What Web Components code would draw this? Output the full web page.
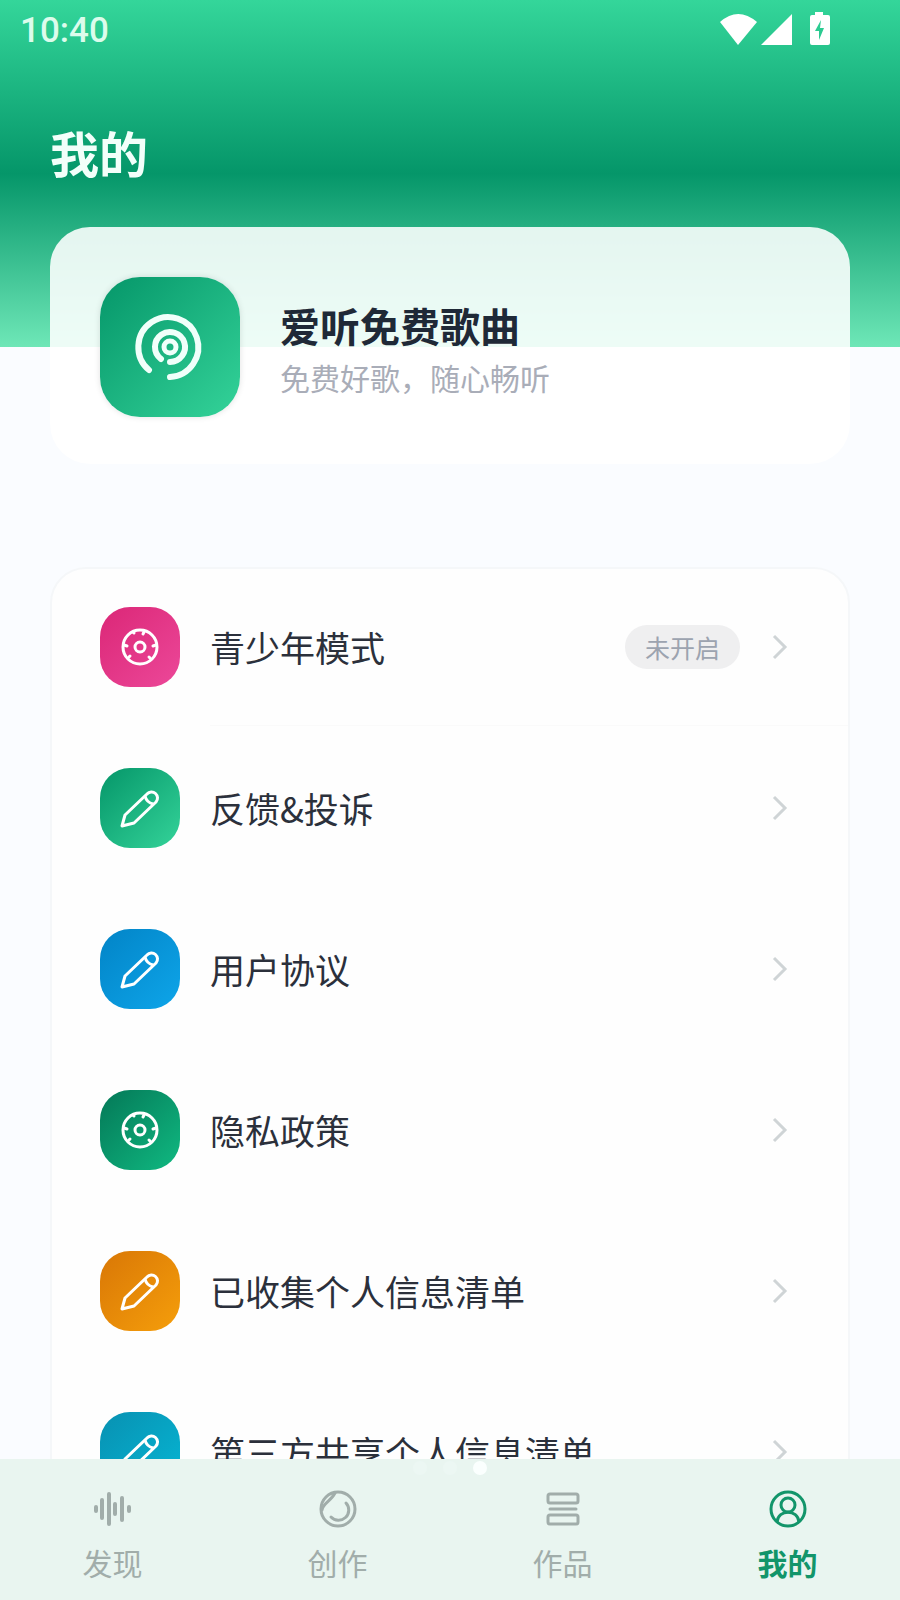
<!DOCTYPE html>
<html lang="zh-CN">
<head>
  <meta charset="utf-8">
  <meta name="viewport" content="width=device-width, initial-scale=1">
  <title>我的</title>
  <style>
    body {
      margin: 0;
      font-family: "Noto Sans CJK SC", sans-serif;
      background: #fafcff;
    }
  </style>
</head>
<body>
  <mine-page>
    <status-bar slot="status" time="10:40"></status-bar>
    <profile-card name="爱听免费歌曲" desc="免费好歌，随心畅听"></profile-card>
    <menu-list>
      <menu-item label="青少年模式" icon="dial" from="#db2777" to="#ec4899" state="未开启" divider></menu-item>
      <menu-item label="反馈&amp;投诉" icon="pencil" from="#059669" to="#34d399"></menu-item>
      <menu-item label="用户协议" icon="pencil" from="#0284c7" to="#0ea5e9"></menu-item>
      <menu-item label="隐私政策" icon="dial" from="#047857" to="#10b981"></menu-item>
      <menu-item label="已收集个人信息清单" icon="pencil" from="#d97706" to="#f59e0b"></menu-item>
      <menu-item label="第三方共享个人信息清单" icon="pencil" from="#0891b2" to="#06b6d4"></menu-item>
    </menu-list>
    <tab-bar slot="tabs">
      <tab-item label="发现" icon="wave"></tab-item>
      <tab-item label="创作" icon="disc"></tab-item>
      <tab-item label="作品" icon="stack"></tab-item>
      <tab-item label="我的" icon="user" active></tab-item>
    </tab-bar>
  </mine-page>

  <script>
    const icons = {
      dial: `
        <svg viewBox="0 0 80 80" width="80" height="80" fill="none" stroke="#fff" stroke-width="3" stroke-linecap="round">
          <circle cx="40" cy="40" r="17"/>
          <circle cx="40" cy="40" r="5"/>
          <path d="M33 25l1 1M44 25l-1 2M24 38l3 1M56 38l-3 1M29 50l1-1M50 51l-1-1"/>
        </svg>`,
      pencil: `
        <svg viewBox="0 0 80 80" width="80" height="80" fill="none" stroke="#fff" stroke-width="3" stroke-linejoin="round">
          <path d="M22 58l3-11 22-21a6 6 0 0 1 9 8l-22 21z"/>
          <path d="M45 28c1 4 4 7 8 8"/>
        </svg>`,
      wave: `
        <svg viewBox="0 0 40 40" width="40" height="40" fill="none" stroke="currentColor" stroke-width="4" stroke-linecap="round">
          <path d="M3 18v4M9 11v18M16 5v30M22 15v10M29 9v22M36 18v4"/>
        </svg>`,
      disc: `
        <svg viewBox="0 0 40 40" width="40" height="40" fill="none" stroke="currentColor" stroke-width="3" stroke-linecap="round">
          <circle cx="20" cy="20" r="17"/>
          <path d="M28 14a10 10 0 0 1-15 14M4 21C5 14 13 12 17 4"/>
        </svg>`,
      stack: `
        <svg viewBox="0 0 40 40" width="40" height="40" fill="none" stroke="currentColor" stroke-width="3" stroke-linecap="round">
          <rect x="5" y="5" width="30" height="9" rx="2"/>
          <path d="M7 20h26"/>
          <rect x="5" y="26" width="30" height="9" rx="2"/>
        </svg>`,
      user: `
        <svg viewBox="0 0 40 40" width="40" height="40" fill="none" stroke="currentColor" stroke-width="3">
          <circle cx="20" cy="20" r="17"/>
          <circle cx="20" cy="16" r="7"/>
          <path d="M9 33c1-13 21-13 22 0"/>
        </svg>`
    };

    class MinePage extends HTMLElement {
      constructor() {
        super();
        this.attachShadow({ mode: 'open' });
        this.shadowRoot.innerHTML = `
          <style>
            :host {
              display: flex;
              flex-direction: column;
              height: 100vh;
              background: linear-gradient(#34d69a, #059669 50%, #6ee7b7) 0 0 / 100% 347px no-repeat #fafcff;
            }
            main {
              flex: 1;
              min-height: 0;
              padding: 60px 50px 0;
              overflow-y: auto;
              scrollbar-width: none;
            }
            h1 {
              margin: 0 0 45px;
              font-size: 49px;
              line-height: 60px;
              font-weight: 700;
              color: #f2fffa;
            }
          </style>
          <slot name="status"></slot>
          <main>
            <h1>我的</h1>
            <slot></slot>
          </main>
          <slot name="tabs"></slot>
        `;
      }
    }

    class StatusBar extends HTMLElement {
      constructor() {
        super();
        this.attachShadow({ mode: 'open' });
        const time = this.getAttribute('time') || '';
        this.shadowRoot.innerHTML = `
          <style>
            :host {
              display: flex;
              align-items: center;
              justify-content: space-between;
              height: 62px;
              padding: 0 70px 0 20px;
            }
            time {
              font: 500 35px/62px Roboto, sans-serif;
              color: #dcfcec;
            }
            svg { display: block; }
          </style>
          <time>${time}</time>
          <svg viewBox="0 0 110 40" width="110" height="40" fill="#fff" aria-hidden="true">
            <path d="M0 11Q18-5 37 11L18 34Z"/>
            <path d="M72 3v31H41Z"/>
            <path fill-rule="evenodd" d="M95 1h8v3h5q2 0 2 2v26q0 2-2 2H92q-2 0-2-2V6q0-2 2-2h3ZM101 9l-6 11h4v9l5-12h-4Z"/>
          </svg>
        `;
      }
    }

    class ProfileCard extends HTMLElement {
      constructor() {
        super();
        this.attachShadow({ mode: 'open' });
        const name = this.getAttribute('name') || '';
        const desc = this.getAttribute('desc') || '';
        this.shadowRoot.innerHTML = `
          <style>
            :host {
              display: flex;
              align-items: center;
              gap: 40px;
              padding: 50px 50px 47px;
              border-radius: 40px;
              background: rgba(255, 255, 255, 0.88);
            }
            .logo {
              flex: none;
              border-radius: 40px;
              background: linear-gradient(135deg, #059669, #34d399);
              box-shadow: 0 0 6px rgba(0, 0, 0, 0.12);
            }
            svg { display: block; }
            h2, p { margin: 0; }
            h2 {
              font-size: 40px;
              line-height: 60px;
              font-weight: 700;
              color: #1f2937;
            }
            p {
              font-size: 30px;
              line-height: 44px;
              color: #a9adb8;
            }
          </style>
          <div class="logo">
            <svg viewBox="0 0 140 140" width="140" height="140" fill="none" stroke="#f0fffa" stroke-width="6" stroke-linecap="round" aria-hidden="true">
              <path d="M49 93A30 30 0 1 1 70 100"/>
              <path d="M61 82A15 15 0 1 1 70 85"/>
              <circle cx="70" cy="70" r="6" stroke-width="5"/>
            </svg>
          </div>
          <div>
            <h2>${name}</h2>
            <p>${desc}</p>
          </div>
        `;
      }
    }

    class MenuList extends HTMLElement {
      constructor() {
        super();
        this.attachShadow({ mode: 'open' });
        this.shadowRoot.innerHTML = `
          <style>
            :host {
              display: flex;
              flex-direction: column;
              gap: 4px;
              margin-top: 103px;
              border: 2px solid #f5f7f9;
              border-radius: 36px;
              background: #fefefe;
            }
          </style>
          <slot></slot>
        `;
      }
    }

    class MenuItem extends HTMLElement {
      constructor() {
        super();
        this.attachShadow({ mode: 'open' });
        const label = this.getAttribute('label') || '';
        const icon = this.getAttribute('icon') || 'pencil';
        const from = this.getAttribute('from');
        const to = this.getAttribute('to');
        const state = this.getAttribute('state') || '';
        this.shadowRoot.innerHTML = `
          <style>
            :host { display: block; }
            button {
              display: flex;
              align-items: center;
              gap: 20px;
              width: 100%;
              padding: 38px 48px;
              border: 0;
              background: none;
              font: inherit;
              text-align: left;
              cursor: pointer;
            }
            svg { display: block; flex: none; }
            .icon {
              flex: none;
              margin-right: 10px;
              border-radius: 30px;
              background: linear-gradient(135deg, ${from}, ${to});
            }
            .label {
              flex: 1;
              font-size: 35px;
              line-height: 50px;
              color: #2b303b;
            }
            .state {
              padding: 0 20px;
              border-radius: 22px;
              font-size: 25px;
              line-height: 44px;
              color: #9ca3af;
              background: #efeff0;
            }
            hr {
              height: 1px;
              margin: 0 0 0 158px;
              border: 0;
              background: transparent;
            }
            :host([divider]) hr { background: #fafafa; }
          </style>
          <button type="button">
            <span class="icon">${icons[icon]}</span>
            <span class="label">${label}</span>
            ${state ? `<span class="state">${state}</span>` : ''}
            <svg viewBox="0 0 40 40" width="40" height="40" fill="none" stroke="#cfd4d6" stroke-width="3">
              <path d="M14 9l11 11-11 11"/>
            </svg>
          </button>
          <hr>
        `;
      }
    }

    class TabBar extends HTMLElement {
      constructor() {
        super();
        this.attachShadow({ mode: 'open' });
        this.shadowRoot.innerHTML = `
          <style>
            :host {
              display: block;
              position: relative;
              background: #e9f5f0;
            }
            nav { display: flex; }
            /* page dots over the top edge of the bar */
            .dots {
              position: absolute;
              top: 2px;
              left: 0;
              right: 0;
              display: flex;
              justify-content: center;
              gap: 16px;
            }
            .dots i {
              width: 14px;
              height: 14px;
              border-radius: 50%;
              background: #ecf7f3;
            }
            .dots .on { background: #fbfffe; }
          </style>
          <div class="dots"><i></i><i></i><i class="on"></i></div>
          <nav><slot></slot></nav>
        `;
      }
    }

    class TabItem extends HTMLElement {
      constructor() {
        super();
        this.attachShadow({ mode: 'open' });
        const label = this.getAttribute('label') || '';
        const icon = this.getAttribute('icon');
        this.shadowRoot.innerHTML = `
          <style>
            :host {
              flex: 1;
              color: #a1adaa;
            }
            :host([active]) {
              color: #12956a;
              font-weight: 700;
            }
            a {
              display: flex;
              flex-direction: column;
              align-items: center;
              gap: 11px;
              padding: 30px 0 16px;
              font-size: 30px;
              line-height: 44px;
              color: inherit;
              text-decoration: none;
            }
            svg { display: block; }
          </style>
          <a href="#${icon}">${icons[icon]}<span>${label}</span></a>
        `;
      }
    }

    customElements.define('mine-page', MinePage);
    customElements.define('status-bar', StatusBar);
    customElements.define('profile-card', ProfileCard);
    customElements.define('menu-list', MenuList);
    customElements.define('menu-item', MenuItem);
    customElements.define('tab-bar', TabBar);
    customElements.define('tab-item', TabItem);
  </script>
</body>
</html>
